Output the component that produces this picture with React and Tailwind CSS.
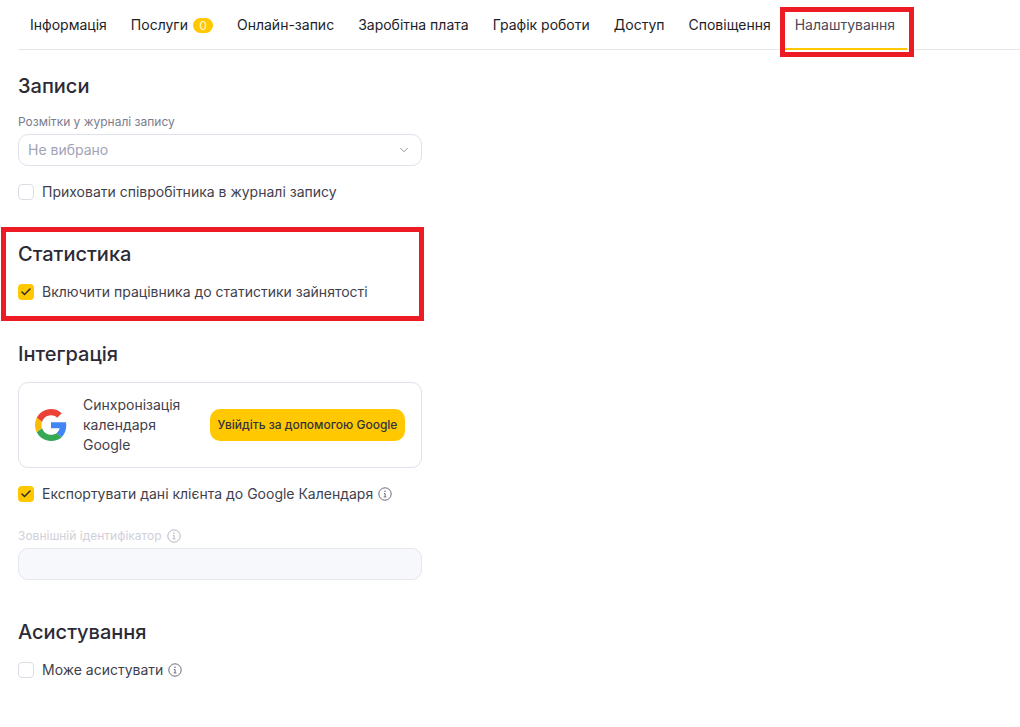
import React from "react";
import { Check, ChevronDown } from "lucide-react";

const tabs = ["Інформація", "Послуги", "Онлайн-запис", "Заробітна плата", "Графік роботи", "Доступ", "Сповіщення", "Налаштування"];

function GoogleLogo() {
    return (
        <svg viewBox="0 0 48 48" className="w-8 h-8 shrink-0">
            <path fill="#EA4335" d="M24 9.5c3.5 0 6.7 1.2 9.2 3.6l6.9-6.9C35.9 2.4 30.4 0 24 0 14.6 0 6.5 5.4 2.6 13.2l8 6.2C12.5 13.6 17.800 9.500 24 9.500z" />
            <path fill="#4285F4" d="M46.900 24.500c0-1.600-.1-3.100-.4-4.500H24v9h12.900c-.6 3-2.200 5.500-4.700 7.200l7.700 6c4.500-4.200 7-10.300 7-17.700z" />
            <path fill="#FBBC05" d="M10.500 28.600c-.5-1.400-.8-3-.8-4.600s.3-3.200.8-4.600l-8-6.200C.9 16.500 0 20.100 0 24s.9 7.500 2.600 10.800l7.900-6.200z" />
            <path fill="#34A853" d="M24 48c6.500 0 11.900-2.100 15.900-5.800l-7.700-6c-2.100 1.400-4.900 2.300-8.200 2.300-6.200 0-11.500-4.200-13.400-9.800l-8 6.200C6.500 42.600 14.600 48 24 48z" />
        </svg>
    );
}

function InfoIcon({ className }) {
    return (
        <svg viewBox="0 0 16 16" fill="none" stroke="currentColor" className={`w-4 h-4 shrink-0 ${className}`}>
            <circle cx="8" cy="8" r="6.2" strokeWidth="1" />
            <circle cx="8" cy="5.2" r="0.8" fill="currentColor" stroke="none" />
            <path d="M6.9 7.500h1.200v3.300M6.700 10.900h2.700" strokeWidth="1" />
        </svg>
    );
}

function CheckRow({ checked, label, info, className }) {
    return (
        <div className={`flex items-center h-4 ${className}`}>
            {checked ? (
                <span className="w-4 h-4 rounded-[4px] bg-[#ffc800] flex items-center justify-center">
                    <Check className="w-3 h-3 text-[#2b2b36]" strokeWidth={3} />
                </span>
            ) : (
                <span className="w-4 h-4 rounded-[4px] border border-[#dcdce6] bg-white" />
            )}
            <span className="ml-2 text-sm leading-5 text-[#3f3f4d]">{label}</span>
            {info && <InfoIcon className="ml-1 text-[#6b6b7b]" />}
        </div>
    );
}

function Heading({ children, className }) {
    return <h2 className={`text-xl leading-7 font-medium text-[#2b2b36] ${className}`}>{children}</h2>;
}

export default function App() {
    return (
        <div className="relative bg-white min-h-[727px] pl-[18px] font-['Inter',sans-serif]">
            {/* tabs */}
            <div className="flex h-[50px] border-b border-[#e6e6ec]">
                {tabs.map((tab, i) => (
                    <div
                        key={tab}
                        className={`flex items-center px-3 h-[50px] text-sm ${
                            i === tabs.length - 1
                                ? "text-[#4a4a5c] border-b-2 border-[#ffc800] pt-[2px]"
                                : "text-[#1d1d29]"
                        }`}
                    >
                        {tab}
                        {tab === "Послуги" && (
                            <span className="ml-[5px] w-[20px] h-[15px] rounded-full bg-[#ffc800] text-[#fff8dc] text-xs leading-[15px] text-center">
                                0
                            </span>
                        )}
                    </div>
                ))}
            </div>

            <div className="w-[404px]">
                <Heading className="mt-[22px]">Записи</Heading>
                <div className="mt-[14px] text-xs leading-4 text-[#7c7c8c]">Розмітки у журналі запису</div>
                <div className="mt-1 h-8 rounded-[10px] border border-[#e1e1ec] flex items-center justify-between px-[9px] text-sm text-[#a3a3b5]">
                    Не вибрано
                    <ChevronDown className="w-[14px] h-[14px] mr-[1px] text-[#8a8a9a]" strokeWidth={1.5} />
                </div>
                <CheckRow label="Приховати співробітника в журналі запису" className="mt-[18px]" />

                <Heading className="mt-10">Статистика</Heading>
                <CheckRow checked label="Включити працівника до статистики зайнятості" className="mt-4" />

                <Heading className="mt-10">Інтеграція</Heading>
                <div className="mt-[14px] h-[86px] rounded-[10px] border border-[#e1e1ec] flex items-center px-4 gap-4">
                    <GoogleLogo />
                    <div className="flex-1 text-sm leading-5 text-[#3f3f4d]">Синхронізація календаря Google</div>
                    <button className="w-[195px] h-8 shrink-0 rounded-[10px] bg-[#ffc800] text-xs font-medium text-[#33333f]">
                        Увійдіть за допомогою Google
                    </button>
                </div>
                <CheckRow checked info label="Експортувати дані клієнта до Google Календаря" className="mt-[18px]" />

                <div className="mt-[26px] flex items-center text-xs leading-4 text-[#d0d0da]">
                    Зовнішній ідентифікатор
                    <InfoIcon className="ml-1 text-[#b4b4c0]" />
                </div>
                <div className="mt-1 h-8 rounded-[10px] border border-[#e6e6ee] bg-[#f7f8fc]" />

                <Heading className="mt-[38px]">Асистування</Heading>
                <CheckRow info label="Може асистувати" className="mt-4" />
            </div>

            {/* red annotation frames */}
            <div className="absolute left-[780px] top-[7px] w-[134px] h-[50px] border-[5px] border-[#ed1c24]" />
            <div className="absolute left-[1px] top-[227px] w-[423px] h-[94px] border-[5px] border-[#ed1c24]" />
        </div>
    );
}
